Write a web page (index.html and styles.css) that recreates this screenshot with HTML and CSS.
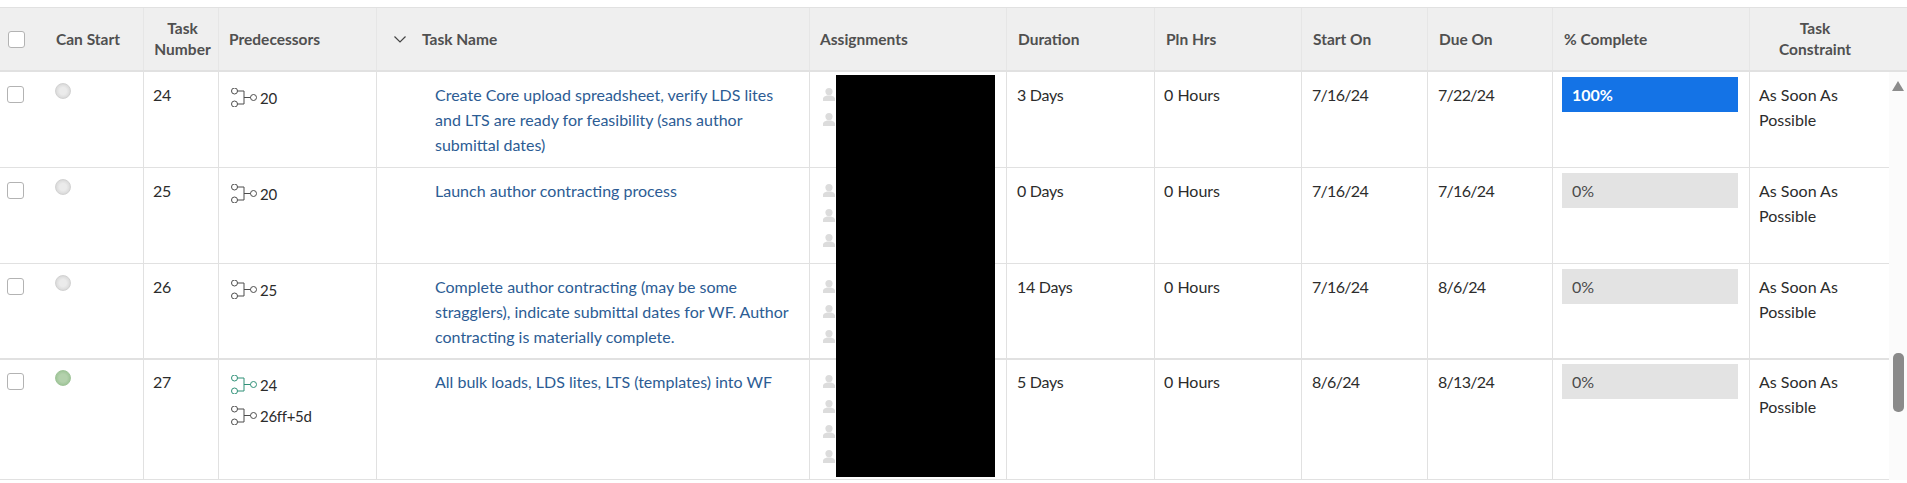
FILE: index.html
```html
<html>
<head>
	<link rel="stylesheet" href="styles.css">
</head>
<body>
	<svg class="defs" width="0" height="0">
		<symbol id="pred" viewBox="0 0 26 19">
			<circle cx="3.5" cy="3" r="3"></circle>
			<circle cx="3.5" cy="16" r="3"></circle>
			<circle cx="22.5" cy="9.5" r="3"></circle>
			<path d="M6.5 3H13V16H6.5M13 9.5H19.5"></path>
		</symbol>
		<symbol id="user" viewBox="0 0 12 13">
			<circle cx="6" cy="3.6" r="3.6"></circle>
			<path d="M0 13V10.5C0 8.8 2.5 8 4 7.5H8C9.5 8 12 8.8 12 10.5V13Z"></path>
		</symbol>
	</svg>
	<div class="grid">
		<div class="head">
			<div class="h c_check"><span class="box"></span></div>
			<div class="h c_start">Can Start</div>
			<div class="h c_num center">Task<br/>Number</div>
			<div class="h c_pred">Predecessors</div>
			<div class="h c_name">
				<svg class="chev" viewBox="0 0 12 7"><path d="M0.5 0.5L6 6L11.5 0.5"></path></svg>
				Task Name
			</div>
			<div class="h c_asg">Assignments</div>
			<div class="h c_dur">Duration</div>
			<div class="h c_hrs">Pln Hrs</div>
			<div class="h c_st">Start On</div>
			<div class="h c_due">Due On</div>
			<div class="h c_pct">% Complete</div>
			<div class="h c_con center">Task<br/>Constraint</div>
		</div>

		<div class="row">
			<div class="d c_check"><span class="box"></span></div>
			<div class="d c_start"><span class="dot"></span></div>
			<div class="d c_num">24</div>
			<div class="d c_pred">
				<div class="pred"><svg class="pico"><use href="#pred"></use></svg>20</div>
			</div>
			<div class="d c_name"><a>Create Core upload spreadsheet, verify LDS lites and LTS are ready for feasibility (sans author submittal dates)</a></div>
			<div class="d c_asg">
				<svg class="user"><use href="#user"></use></svg>
				<svg class="user"><use href="#user"></use></svg>
			</div>
			<div class="d c_dur">3 Days</div>
			<div class="d c_hrs">0 Hours</div>
			<div class="d c_st">7/16/24</div>
			<div class="d c_due">7/22/24</div>
			<div class="d c_pct"><div class="bar done">100%</div></div>
			<div class="d c_con">As Soon As Possible</div>
		</div>

		<div class="row">
			<div class="d c_check"><span class="box"></span></div>
			<div class="d c_start"><span class="dot"></span></div>
			<div class="d c_num">25</div>
			<div class="d c_pred">
				<div class="pred"><svg class="pico"><use href="#pred"></use></svg>20</div>
			</div>
			<div class="d c_name"><a>Launch author contracting process</a></div>
			<div class="d c_asg">
				<svg class="user"><use href="#user"></use></svg>
				<svg class="user"><use href="#user"></use></svg>
				<svg class="user"><use href="#user"></use></svg>
			</div>
			<div class="d c_dur">0 Days</div>
			<div class="d c_hrs">0 Hours</div>
			<div class="d c_st">7/16/24</div>
			<div class="d c_due">7/16/24</div>
			<div class="d c_pct"><div class="bar">0%</div></div>
			<div class="d c_con">As Soon As Possible</div>
		</div>

		<div class="row thick">
			<div class="d c_check"><span class="box"></span></div>
			<div class="d c_start"><span class="dot"></span></div>
			<div class="d c_num">26</div>
			<div class="d c_pred">
				<div class="pred"><svg class="pico"><use href="#pred"></use></svg>25</div>
			</div>
			<div class="d c_name"><a>Complete author contracting (may be some stragglers), indicate submittal dates for WF. Author contracting is materially complete.</a></div>
			<div class="d c_asg">
				<svg class="user"><use href="#user"></use></svg>
				<svg class="user"><use href="#user"></use></svg>
				<svg class="user"><use href="#user"></use></svg>
			</div>
			<div class="d c_dur">14 Days</div>
			<div class="d c_hrs">0 Hours</div>
			<div class="d c_st">7/16/24</div>
			<div class="d c_due">8/6/24</div>
			<div class="d c_pct"><div class="bar">0%</div></div>
			<div class="d c_con">As Soon As Possible</div>
		</div>

		<div class="row tall">
			<div class="d c_check"><span class="box"></span></div>
			<div class="d c_start"><span class="dot green"></span></div>
			<div class="d c_num">27</div>
			<div class="d c_pred">
				<div class="pred ok"><svg class="pico"><use href="#pred"></use></svg>24</div>
				<div class="pred"><svg class="pico"><use href="#pred"></use></svg>26ff+5d</div>
			</div>
			<div class="d c_name"><a>All bulk loads, LDS lites, LTS (templates) into WF</a></div>
			<div class="d c_asg">
				<svg class="user"><use href="#user"></use></svg>
				<svg class="user"><use href="#user"></use></svg>
				<svg class="user"><use href="#user"></use></svg>
				<svg class="user"><use href="#user"></use></svg>
			</div>
			<div class="d c_dur">5 Days</div>
			<div class="d c_hrs">0 Hours</div>
			<div class="d c_st">8/6/24</div>
			<div class="d c_due">8/13/24</div>
			<div class="d c_pct"><div class="bar">0%</div></div>
			<div class="d c_con">As Soon As Possible</div>
		</div>

		<div class="redact"></div>
		<div class="track">
			<span class="arrow"></span>
			<span class="thumb"></span>
		</div>
	</div>
</body>
</html>
```

FILE: styles.css
```css
body{
	margin: 0;
	padding-top: 7px;
	font-family: Lato, sans-serif;
	font-size: 16px;
	color: #2c2c2c;
	background: white;
	overflow: hidden;
}

.defs{
	display: block;
	height: 0;
}

.grid{
	position: relative;
	width: 1907px;
}

.head{
	display: flex;
	height: 62px;
	background: #efefef;
	border-top: 1px solid #e1e1e1;
	border-bottom: 2px solid #e1e1e1;
	font-weight: 700;
	font-size: 15.5px;
	line-height: 21px;
	color: #505050;
}

.h{
	display: flex;
	align-items: center;
	flex: none;
	box-sizing: border-box;
	padding-left: 11px;
	border-right: 1px solid #e6e6e6;
}
.h.center{
	justify-content: center;
	text-align: center;
	padding-left: 0;
}

.row{
	display: flex;
	height: 95px;
	width: 1889px;
	border-bottom: 1px solid #e1e1e1;
}
.thick{
	border-bottom-width: 2px;
	height: 94px;
}
.tall{
	height: 119px;
}

.d{
	flex: none;
	box-sizing: border-box;
	padding: 10px 9px 0 10px;
	line-height: 25px;
	border-right: 1px solid #e1e1e1;
}

.c_check{ width: 44px; border-right: none; }
.c_start{ width: 100px; }
.c_num{ width: 75px; }
.c_pred{ width: 158px; }
.c_name{ width: 433px; }
.c_asg{ width: 197px; }
.c_dur{ width: 148px; }
.c_hrs{ width: 147px; }
.c_st{ width: 126px; }
.c_due{ width: 125px; }
.c_pct{ width: 197px; }
.c_con{ width: 139px; border-right: none; }

.d.c_check{ padding-left: 7px; }
.d.c_start{ padding-left: 11px; }
.d.c_num{ padding-left: 9px; letter-spacing: -0.4px; }
.d.c_hrs{ padding-left: 9px; }
.d.c_con{ padding-left: 9px; }
.d.c_pct{ padding-left: 9px; }
.d.c_asg{ padding-top: 16px; }
.d.c_dur{ letter-spacing: -0.3px; }
.d.c_st, .d.c_due{ letter-spacing: -0.7px; }

.tall .d{ padding-top: 9px; }
.tall .d.c_asg{ padding-top: 15px; }

.h.c_check{ padding-left: 8px; }
.h.c_start{ padding-left: 12px; }
.h.c_num{ padding-left: 3px; }
.h.c_pred{ padding-left: 10px; }
.h.c_name{ padding-left: 17px; }
.h.c_asg{ padding-left: 10px; }
.h.c_con{ width: 158px; padding-right: 28px; border-right: none; }

.box{
	display: block;
	width: 15px;
	height: 15px;
	background: white;
	border: 1px solid #b3b3b3;
	border-radius: 3px;
}
.d .box{
	margin-top: 4px;
}

.dot{
	display: block;
	width: 14px;
	height: 14px;
	margin-top: 1px;
	border-radius: 50%;
	background: radial-gradient(circle, #ebebeb 35%, #cdcdcd 100%);
	border: 1px solid #d2d2d2;
}
.green{
	background: radial-gradient(circle, #b3d1ac 40%, #8fba88 100%);
	border-color: #9fc599;
}

.chev{
	width: 12px;
	height: 7px;
	margin-right: 16px;
	fill: none;
	stroke: #444;
	stroke-width: 1.2;
}

.pred{
	display: flex;
	align-items: center;
	height: 31px;
	margin-top: 1px;
	margin-bottom: -1px;
	padding-left: 2px;
	font-size: 15px;
	letter-spacing: -0.3px;
}
.pico{
	width: 26px;
	height: 19px;
	margin-top: -2px;
	margin-right: 3px;
	fill: none;
	stroke: #4d4d4d;
	stroke-width: 1;
}
.ok .pico{
	stroke: #2f9077;
}

.c_name a{
	display: block;
	padding-left: 48px;
	color: #2c5c94;
}

.user{
	display: block;
	width: 12px;
	height: 13px;
	margin: 0 0 12px 3px;
	fill: #dcdcdc;
}

.bar{
	width: 176px;
	height: 35px;
	margin-top: -5px;
	padding-left: 10px;
	box-sizing: border-box;
	line-height: 35px;
	background: #e3e3e3;
	color: #4b4b4b;
}
.done{
	background: #1473e6;
	color: white;
	font-weight: 700;
}

.redact{
	position: absolute;
	left: 836px;
	top: 68px;
	width: 159px;
	height: 402px;
	background: black;
}

.track{
	position: absolute;
	right: 0;
	top: 65px;
	width: 18px;
	bottom: 0;
	background: #fbfbfb;
}
.arrow{
	position: absolute;
	left: 3px;
	top: 9px;
	border-left: 6.5px solid transparent;
	border-right: 6.5px solid transparent;
	border-bottom: 10px solid #8c8c8c;
}
.thumb{
	position: absolute;
	left: 4px;
	top: 281px;
	width: 11px;
	height: 59px;
	border-radius: 5px;
	background: #8a8a8a;
}
```
